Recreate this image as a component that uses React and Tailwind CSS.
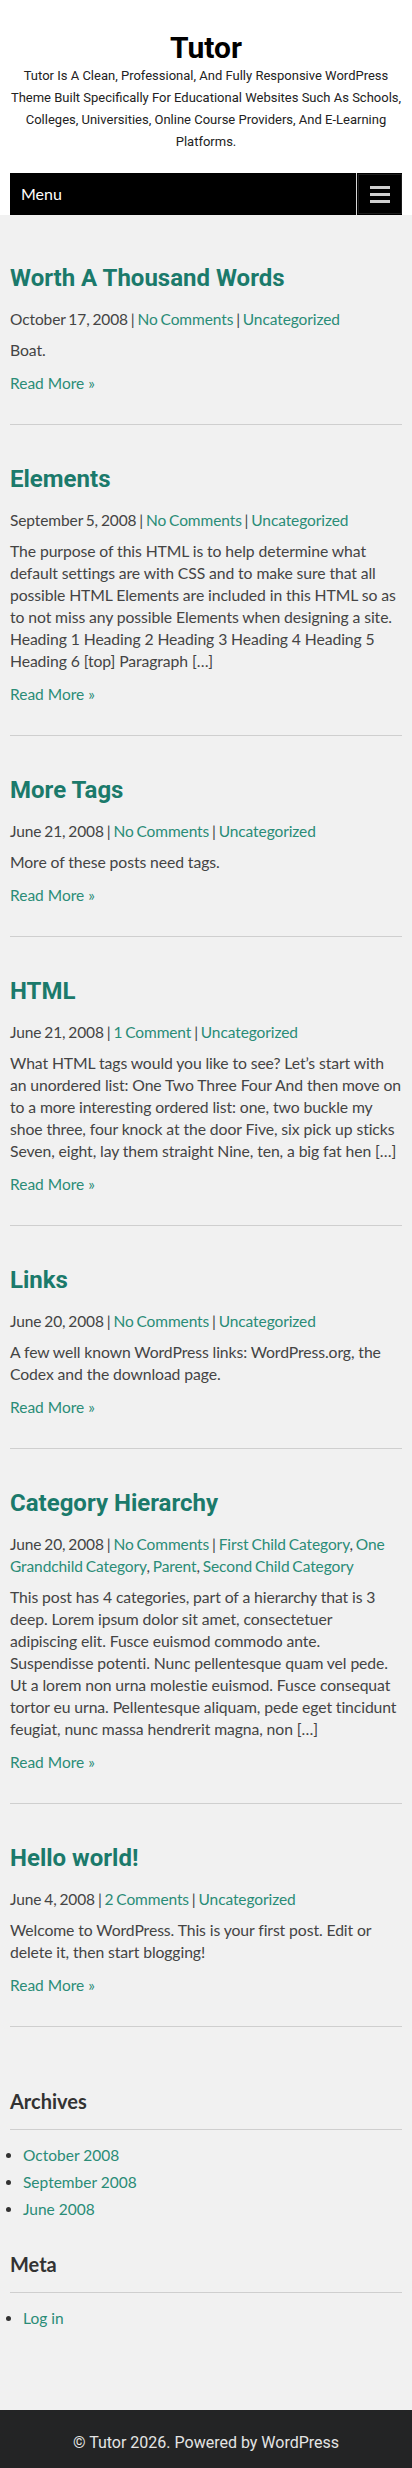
import React from 'react'

const posts = [
  {
    title: 'Worth A Thousand Words',
    date: 'October 17, 2008',
    comments: 'No Comments',
    cats: ['Uncategorized'],
    body: 'Boat.',
  },
  {
    title: 'Elements',
    date: 'September 5, 2008',
    comments: 'No Comments',
    cats: ['Uncategorized'],
    body: 'The purpose of this HTML is to help determine what default settings are with CSS and to make sure that all possible HTML Elements are included in this HTML so as to not miss any possible Elements when designing a site. Heading 1 Heading 2 Heading 3 Heading 4 Heading 5 Heading 6 [top] Paragraph […]',
  },
  {
    title: 'More Tags',
    date: 'June 21, 2008',
    comments: 'No Comments',
    cats: ['Uncategorized'],
    body: 'More of these posts need tags.',
  },
  {
    title: 'HTML',
    date: 'June 21, 2008',
    comments: '1 Comment',
    cats: ['Uncategorized'],
    body: 'What HTML tags would you like to see? Let’s start with an unordered list: One Two Three Four And then move on to a more interesting ordered list: one, two buckle my shoe three, four knock at the door Five, six pick up sticks Seven, eight, lay them straight Nine, ten, a big fat hen […]',
  },
  {
    title: 'Links',
    date: 'June 20, 2008',
    comments: 'No Comments',
    cats: ['Uncategorized'],
    body: 'A few well known WordPress links: WordPress.org, the Codex and the download page.',
  },
  {
    title: 'Category Hierarchy',
    date: 'June 20, 2008',
    comments: 'No Comments',
    cats: ['First Child Category', 'One Grandchild Category', 'Parent', 'Second Child Category'],
    body: 'This post has 4 categories, part of a hierarchy that is 3 deep. Lorem ipsum dolor sit amet, consectetuer adipiscing elit. Fusce euismod commodo ante. Suspendisse potenti. Nunc pellentesque quam vel pede. Ut a lorem non urna molestie euismod. Fusce consequat tortor eu urna. Pellentesque aliquam, pede eget tincidunt feugiat, nunc massa hendrerit magna, non […]',
  },
  {
    title: 'Hello world!',
    date: 'June 4, 2008',
    comments: '2 Comments',
    cats: ['Uncategorized'],
    body: 'Welcome to WordPress. This is your first post. Edit or delete it, then start blogging!',
  },
]

function Post({ post, first }) {
  return (
    <article className={`border-b border-[#cfcfcf] pb-[30px] ${first ? 'pt-[48px]' : 'pt-[39px]'}`}>
      <h2 className="font-['Roboto',sans-serif] text-[24px] leading-[30px] font-bold text-[#1b7a6b]">
        {post.title}
      </h2>
      <div className="mt-[15px] text-[15.5px] leading-[22px] tracking-[-0.1px] [word-spacing:-1px]">
        {post.date} | <a className="text-[#2a8c77]">{post.comments}</a> |{' '}
        {post.cats.map((c, i) => (
          <span key={c}>
            <a className="text-[#2a8c77]">{c}</a>
            {i < post.cats.length - 1 ? ', ' : ''}
          </span>
        ))}
      </div>
      <p className="mt-[9px] text-[15.75px] leading-[22px] tracking-[-0.1px]">{post.body}</p>
      <a className="mt-[11px] block text-[15.5px] leading-[22px] text-[#2a8c77]">Read More »</a>
    </article>
  )
}

function Widget({ title, items, className }) {
  return (
    <section className={className}>
      <h3 className="text-[20px] leading-[26px] font-bold text-[#333]">{title}</h3>
      <div className="mt-[15px] border-t border-[#cfcfcf]" />
      <ul className="mt-[12px] list-disc pl-[13px]">
        {items.map((it) => (
          <li key={it} className="text-[15.5px] leading-[27px] text-[#2a8c77] marker:text-[#333]">
            <a>{it}</a>
          </li>
        ))}
      </ul>
    </section>
  )
}

export default function App() {
  return (
    <div className="min-h-[2468px] bg-[#f1f1f1] font-['Lato',sans-serif] text-[#444]">
      {/* Header */}
      <header className="bg-white px-[10px] pt-[30px]">
        <h1 className="text-center font-['Roboto',sans-serif] text-[30px] leading-[36px] font-bold text-black">
          Tutor
        </h1>
        <p className="-mt-px text-center font-['Roboto',sans-serif] text-[13px] leading-[22px] text-[#222]">
          Tutor Is A Clean, Professional, And Fully Responsive WordPress Theme Built Specifically For Educational Websites Such As Schools, Colleges, Universities, Online Course Providers, And E-Learning Platforms.
        </p>
        <nav className="mt-[20px] flex h-[42px] items-center bg-black">
          <span className="flex-1 pl-[11px] text-[16px] text-white">Menu</span>
          <button className="flex h-full w-[46px] items-center justify-center border-l border-[#d6d6d6]">
            <span className="flex h-[40px] w-[44px] flex-col items-center justify-center gap-[4px] border border-[#1c1c1c]">
              <span className="h-[3px] w-[20px] bg-[#cfcfcf]" />
              <span className="h-[3px] w-[20px] bg-[#cfcfcf]" />
              <span className="h-[3px] w-[20px] bg-[#cfcfcf]" />
            </span>
          </button>
        </nav>
      </header>

      {/* Posts */}
      <main className="px-[10px]">
        {posts.map((p, i) => (
          <Post key={p.title} post={p} first={i === 0} />
        ))}

        <Widget
          title="Archives"
          items={['October 2008', 'September 2008', 'June 2008']}
          className="pt-[61px]"
        />
        <Widget title="Meta" items={['Log in']} className="pt-[28px]" />
      </main>

      {/* Footer */}
      <footer className="mt-[78px] flex h-[65px] items-center justify-center bg-[#232425] font-['Roboto',sans-serif] text-[16px] text-[#e4e4e4]">
        © Tutor 2026. Powered by WordPress
      </footer>
    </div>
  )
}
